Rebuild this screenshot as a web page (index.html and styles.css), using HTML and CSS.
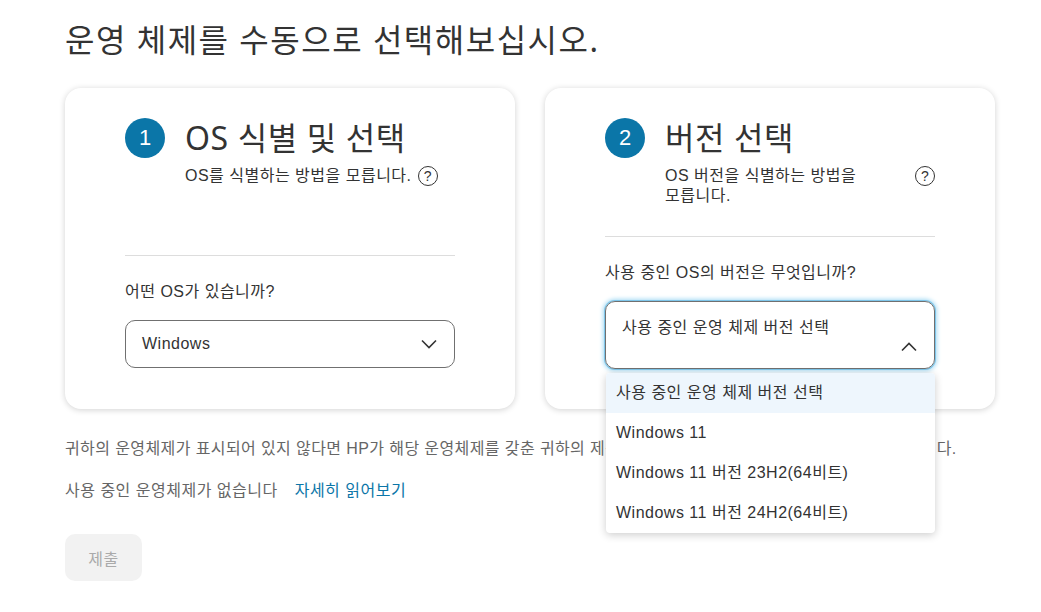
FILE: index.html
```html
<!DOCTYPE html>
<html lang="ko">
<head>
<meta charset="utf-8">
<link rel="stylesheet" href="styles.css">
</head>
<body>
<main class="page">
  <h1 class="title">운영 체제를 수동으로 선택해보십시오.</h1>
  <div class="cards">
    <section class="card">
      <div class="card-head">
        <span class="step">1</span>
        <h2 class="step-title">OS 식별 및 선택</h2>
      </div>
      <div class="help help-left">
        <span class="help-text">OS를 식별하는 방법을 모릅니다.</span>
        <span class="qicon">?</span>
      </div>
      <hr class="divider">
      <label class="field-label">어떤 OS가 있습니까?</label>
      <div class="select">
        <span>Windows</span>
        <svg class="chev" width="16" height="10" viewBox="0 0 16 10"><path d="M1 1.5 L8 8.5 L15 1.5" fill="none" stroke="#333" stroke-width="1.6"/></svg>
      </div>
    </section>
    <section class="card">
      <div class="card-head">
        <span class="step">2</span>
        <h2 class="step-title">버전 선택</h2>
      </div>
      <div class="help help-right">
        <span class="help-text narrow">OS 버전을 식별하는 방법을 모릅니다.</span>
        <span class="qicon push">?</span>
      </div>
      <hr class="divider">
      <label class="field-label">사용 중인 OS의 버전은 무엇입니까?</label>
      <div class="select select-open">
        <span>사용 중인 운영 체제 버전 선택</span>
        <svg class="chev-up" width="16" height="10" viewBox="0 0 16 10"><path d="M1 8.5 L8 1.5 L15 8.5" fill="none" stroke="#333" stroke-width="1.6"/></svg>
        <ul class="menu">
          <li class="active">사용 중인 운영 체제 버전 선택</li>
          <li>Windows 11</li>
          <li>Windows 11 버전 23H2(64비트)</li>
          <li>Windows 11 버전 24H2(64비트)</li>
        </ul>
      </div>
    </section>
  </div>
  <p class="note">귀하의 운영체제가 표시되어 있지 않다면 HP가 해당 운영체제를 갖춘 귀하의 제품에 대한 드라이버를 제공하지 않을 수도 있습니다.</p>
  <p class="note">사용 중인 운영체제가 없습니다 <a class="link" href="#">자세히 읽어보기</a></p>
  <button class="submit" disabled>제출</button>
</main>
</body>
</html>
```

FILE: styles.css
```css
* { box-sizing: border-box; }
html, body { margin: 0; padding: 0; background: #fff; }
body {
  font-family: "Liberation Sans", "Noto Sans CJK KR", sans-serif;
  color: #333;
  font-size: 16px;
  letter-spacing: 0.5px;
  word-break: keep-all;
}
.page { padding: 18px 0 0 65px; width: 1041px; }
.title {
  margin: 0;
  font-family: "Noto Sans", "Noto Sans CJK KR", sans-serif;
  font-size: 32px;
  font-weight: 400;
  line-height: 44px;
  color: #333;
  letter-spacing: 1.5px;
}
.cards {
  display: flex;
  gap: 30px;
  margin-top: 26px;
}
.card {
  width: 450px;
  border-radius: 16px;
  box-shadow: 0 1px 6px rgba(0,0,0,0.18);
  padding: 30px 60px 40px;
  background: #fff;
}
.card-head { display: flex; align-items: center; gap: 20px; height: 40px; }
.step {
  width: 40px; height: 40px; border-radius: 50%;
  background: #0b76a8; color: #fff;
  display: flex; align-items: center; justify-content: center;
  font-size: 22px; letter-spacing: 0;
}
.step-title {
  margin: 0; font-size: 32px; font-weight: 400; color: #333; line-height: 40px;
  font-family: "Noto Sans", "Noto Sans CJK KR", sans-serif;
  letter-spacing: 0.6px;
}
.help {
  display: flex; align-items: flex-start; gap: 6px;
  margin-left: 60px; margin-top: 8px;
  line-height: 20px; color: #333;
}
.help-left { margin-bottom: 69px; }
.help-right { margin-bottom: 30px; }
.narrow { width: 215px; }
.qicon {
  width: 20px; height: 20px; border: 1.5px solid #333; border-radius: 50%;
  display: flex; align-items: center; justify-content: center;
  font-size: 14px; line-height: 1; flex: none; letter-spacing: 0;
}
.push { margin-left: auto; }
.divider { border: 0; border-top: 1px solid #ddd; margin: 0 0 26px; }
.field-label { display: block; line-height: 20px; color: #333; margin-bottom: 18px; }
.select {
  position: relative;
  display: flex; align-items: center; justify-content: space-between;
  height: 48px; border: 1px solid #707070; border-radius: 10px;
  padding: 0 17px 0 16px; color: #333;
}
.select-open {
  height: 68px; align-items: flex-start; padding-top: 12px;
  box-shadow: 0 0 0 1px #7fc6ea, 0 0 4px 2px #a8dcf5;
}
.chev-up { position: absolute; right: 17px; bottom: 16px; }
.menu {
  position: absolute; left: 0; top: 71px; width: 329px;
  margin: 0; padding: 0; list-style: none;
  background: #fff; border-radius: 4px;
  box-shadow: 0 2px 8px rgba(0,0,0,0.2);
  z-index: 5; overflow: hidden;
}
.menu li { height: 40px; line-height: 39px; padding-left: 10px; color: #333; }
.menu li.active { background: #eef6fd; }
.note { margin: 0; line-height: 20px; color: #666; }
.cards + .note { margin-top: 30px; letter-spacing: 0.4px; }
.note + .note { margin-top: 22px; }
.link { color: #0b76a8; text-decoration: none; margin-left: 12px; }
.submit {
  margin-top: 33px; width: 77px; height: 47px; border: 0; border-radius: 10px;
  background: #f2f2f2; color: #aaa; font-size: 16px;
  font-family: "Liberation Sans", "Noto Sans CJK KR", sans-serif;
  letter-spacing: 0.5px;
}
```
